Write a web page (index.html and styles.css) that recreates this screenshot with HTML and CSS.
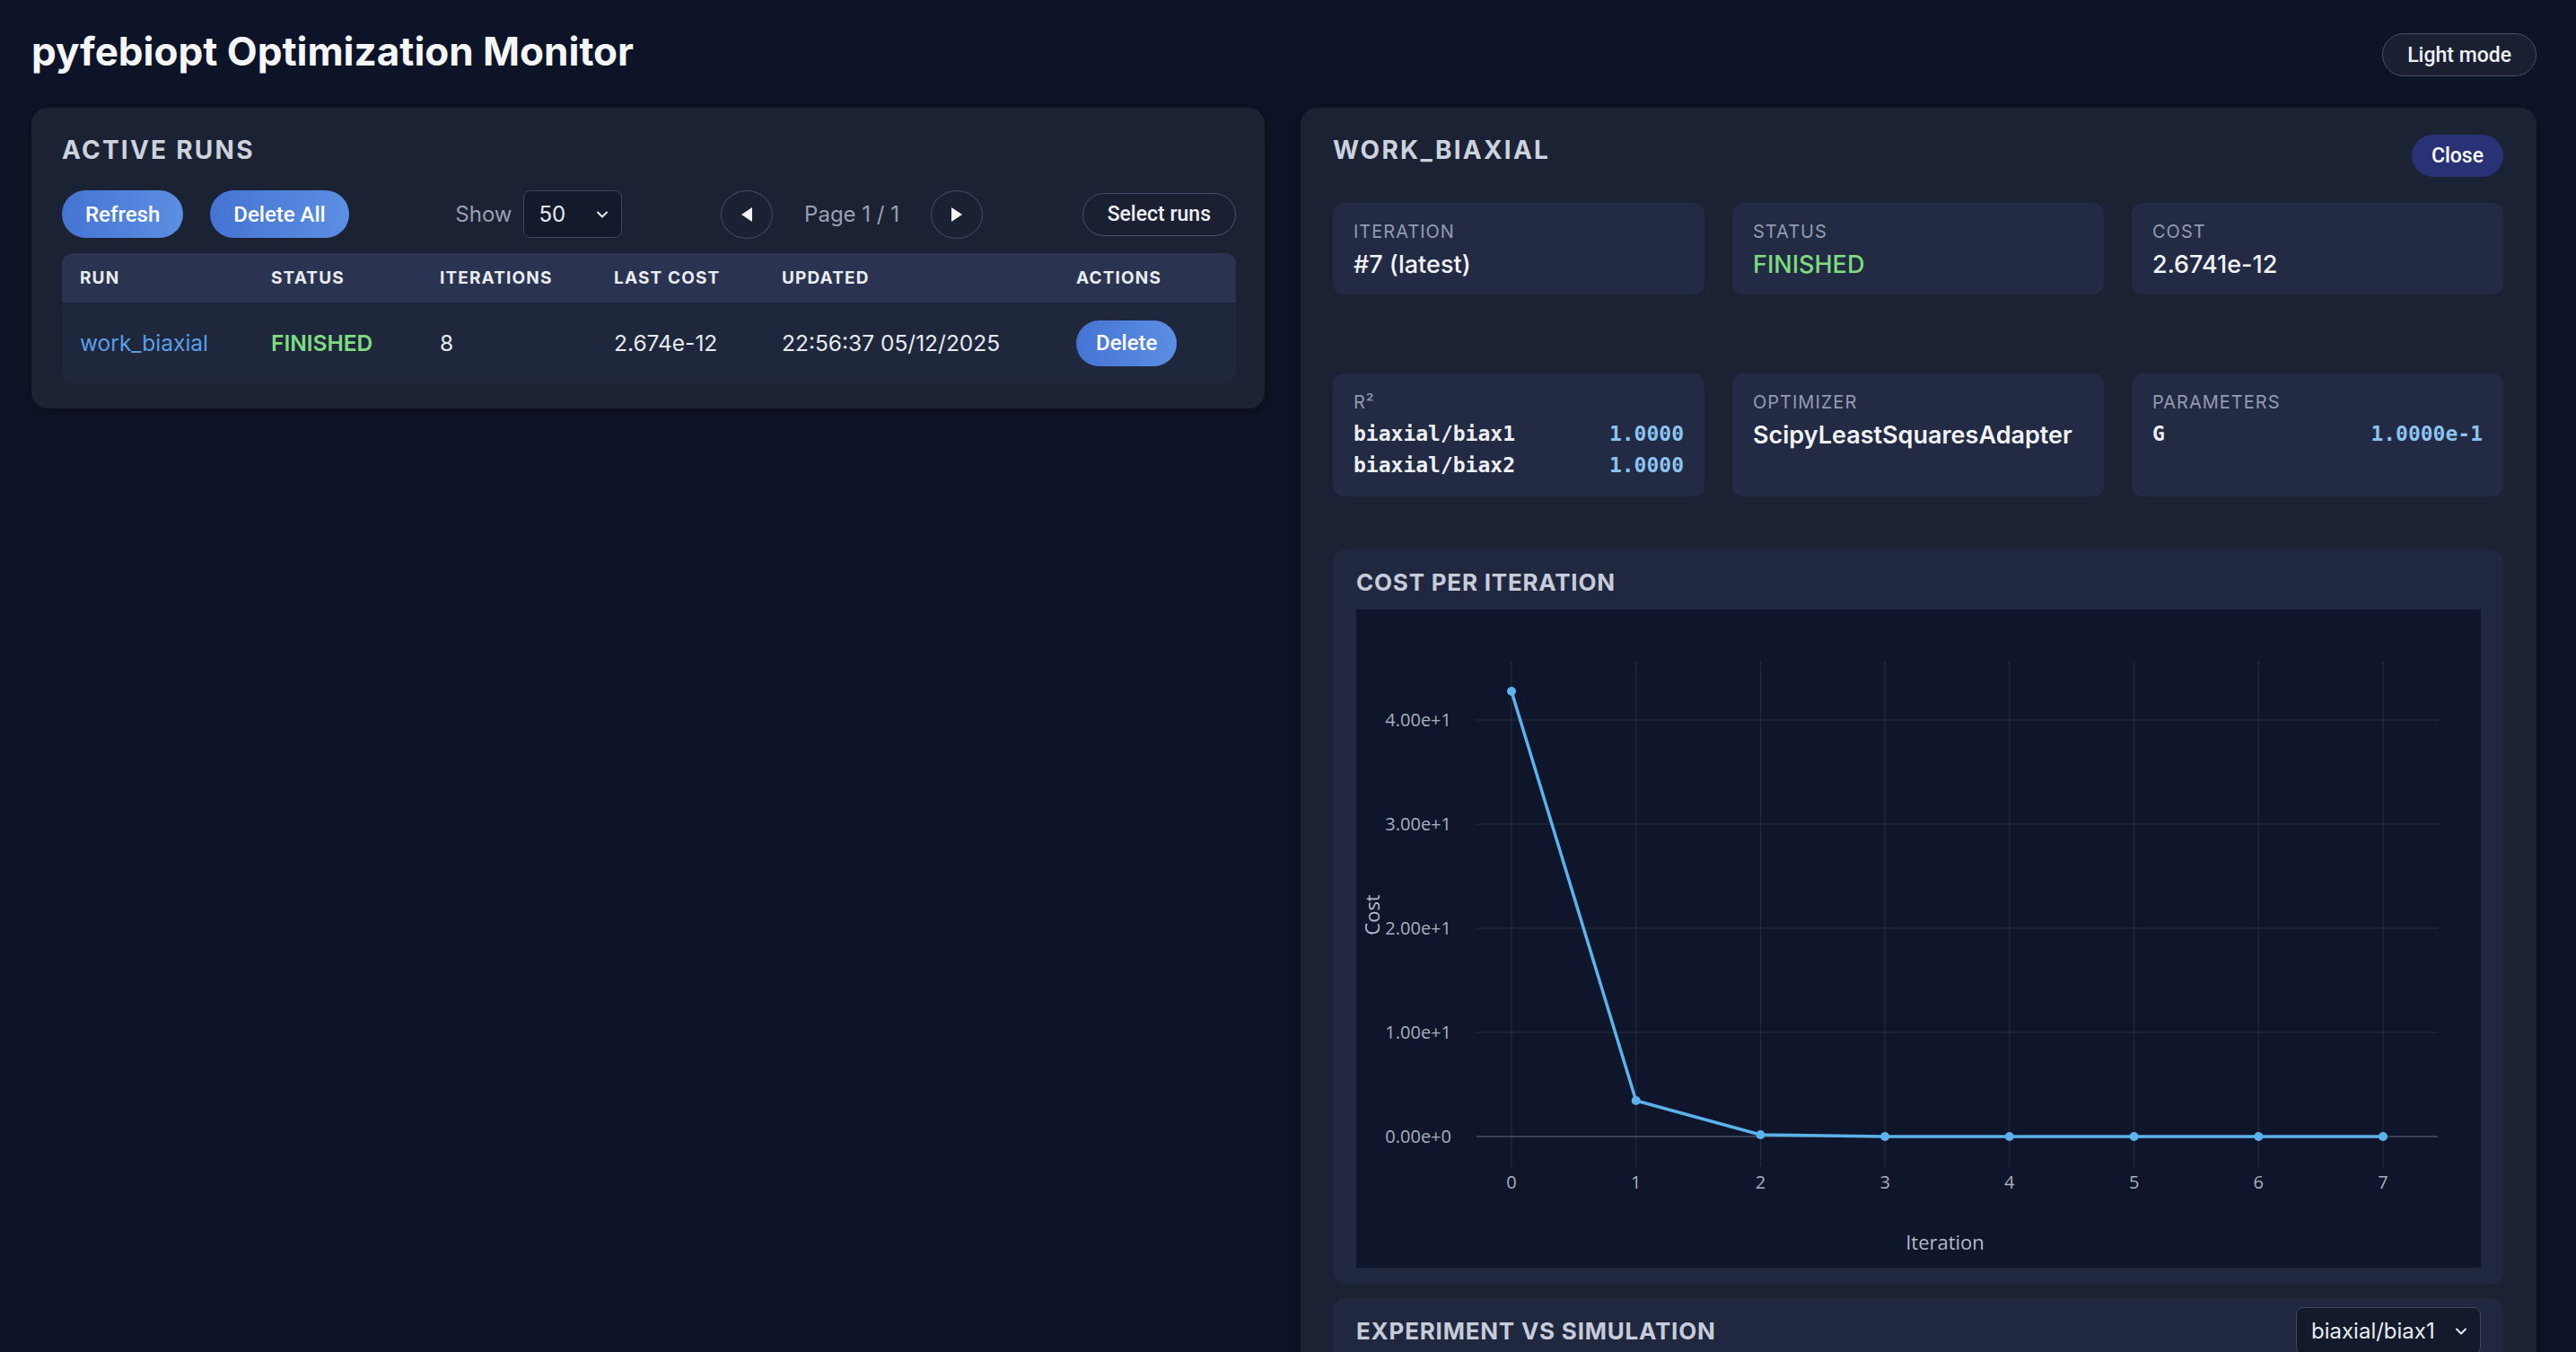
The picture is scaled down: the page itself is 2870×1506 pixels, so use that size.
FILE: index.html
```html
<!DOCTYPE html>
<html lang="en">
<head>
  <meta charset="UTF-8" />
  <meta name="viewport" content="width=device-width, initial-scale=1.0"/>
  <title>pyfebiopt Optimization Monitor</title>
  <link rel="stylesheet" href="styles.css">
</head>
<body>
<div class="page">

  <header class="topbar">
    <h1>pyfebiopt Optimization Monitor</h1>
    <button class="btn-ghost theme-toggle">Light mode</button>
  </header>

  <main class="layout">

    <!-- runs list -->
    <section class="panel runs">
      <h2>Active Runs</h2>
      <div class="toolbar">
        <div class="group">
          <button class="btn">Refresh</button>
          <button class="btn">Delete All</button>
        </div>
        <div class="show">
          <span>Show</span>
          <div class="select small">
            <span>50</span>
            <svg width="14" height="10" viewBox="0 0 14 10"><path d="M2 2.5 L7 7.5 L12 2.5" fill="none" stroke="#e8ebf1" stroke-width="2" stroke-linecap="round" stroke-linejoin="round"/></svg>
          </div>
        </div>
        <div class="pager">
          <button class="circle"><svg width="16" height="18" viewBox="0 0 16 18"><polygon points="14,1 14,17 2,9" fill="#f2f4f8"/></svg></button>
          <span>Page 1 / 1</span>
          <button class="circle"><svg width="16" height="18" viewBox="0 0 16 18"><polygon points="2,1 2,17 14,9" fill="#f2f4f8"/></svg></button>
        </div>
        <button class="btn-ghost">Select runs</button>
      </div>

      <table class="runs-table">
        <colgroup>
          <col style="width:213px"><col style="width:188px"><col style="width:194px">
          <col style="width:187px"><col style="width:328px"><col>
        </colgroup>
        <thead>
          <tr><th>Run</th><th>Status</th><th>Iterations</th><th>Last cost</th><th>Updated</th><th>Actions</th></tr>
        </thead>
        <tbody>
          <tr>
            <td><a class="run-link" href="#">work_biaxial</a></td>
            <td class="ok">FINISHED</td>
            <td>8</td>
            <td>2.674e-12</td>
            <td>22:56:37 05/12/2025</td>
            <td><button class="btn btn-row">Delete</button></td>
          </tr>
        </tbody>
      </table>
    </section>

    <!-- run detail -->
    <section class="panel detail">
      <div class="detail-head">
        <h2>work_biaxial</h2>
        <button class="btn-close">Close</button>
      </div>

      <div class="stats">
        <div class="stat">
          <div class="stat-label">Iteration</div>
          <div class="stat-value">#7 (latest)</div>
        </div>
        <div class="stat">
          <div class="stat-label">Status</div>
          <div class="stat-value ok">FINISHED</div>
        </div>
        <div class="stat">
          <div class="stat-label">Cost</div>
          <div class="stat-value">2.6741e-12</div>
        </div>
        <div class="stat">
          <div class="stat-label">R²</div>
          <div class="mono-list">
            <div class="mono-row"><span>biaxial/biax1</span><span class="num">1.0000</span></div>
            <div class="mono-row"><span>biaxial/biax2</span><span class="num">1.0000</span></div>
          </div>
        </div>
        <div class="stat">
          <div class="stat-label">Optimizer</div>
          <div class="stat-value strong">ScipyLeastSquaresAdapter</div>
        </div>
        <div class="stat">
          <div class="stat-label">Parameters</div>
          <div class="mono-list">
            <div class="mono-row"><span>G</span><span class="num">1.0000e-1</span></div>
          </div>
        </div>
      </div>

      <div class="chart-card">
        <h3>Cost per iteration</h3>
        <div class="plot">
          <svg width="1253" height="733" viewBox="0 0 1253 733" class="chart">
            <!-- vertical grid -->
            <g stroke="#2a3042" stroke-width="1">
              <line x1="173" y1="58" x2="173" y2="621"/>
              <line x1="311.7" y1="58" x2="311.7" y2="621"/>
              <line x1="450.4" y1="58" x2="450.4" y2="621"/>
              <line x1="589.1" y1="58" x2="589.1" y2="621"/>
              <line x1="727.8" y1="58" x2="727.8" y2="621"/>
              <line x1="866.6" y1="58" x2="866.6" y2="621"/>
              <line x1="1005.3" y1="58" x2="1005.3" y2="621"/>
              <line x1="1144" y1="58" x2="1144" y2="621"/>
            </g>
            <!-- horizontal grid -->
            <g stroke="#2a3042" stroke-width="1">
              <line x1="134" y1="123" x2="1205" y2="123"/>
              <line x1="134" y1="239" x2="1205" y2="239"/>
              <line x1="134" y1="355" x2="1205" y2="355"/>
              <line x1="134" y1="471" x2="1205" y2="471"/>
            </g>
            <line x1="134" y1="587" x2="1205" y2="587" stroke="#3b4255" stroke-width="2"/>
            <!-- y ticks -->
            <g class="tick" text-anchor="end">
              <text x="106" y="130">4.00e+1</text>
              <text x="106" y="246">3.00e+1</text>
              <text x="106" y="362">2.00e+1</text>
              <text x="106" y="478">1.00e+1</text>
              <text x="106" y="594">0.00e+0</text>
            </g>
            <!-- x ticks -->
            <g class="tick" text-anchor="middle">
              <text x="173" y="645">0</text>
              <text x="311.7" y="645">1</text>
              <text x="450.4" y="645">2</text>
              <text x="589.1" y="645">3</text>
              <text x="727.8" y="645">4</text>
              <text x="866.6" y="645">5</text>
              <text x="1005.3" y="645">6</text>
              <text x="1144" y="645">7</text>
            </g>
            <text class="axis-title" x="656" y="713" text-anchor="middle">Iteration</text>
            <text class="axis-title" transform="translate(26,340) rotate(-90)" text-anchor="middle">Cost</text>
            <!-- trace -->
            <polyline points="173,91 311.7,547 450.4,585 589.1,587 727.8,587 866.6,587 1005.3,587 1144,587"
                      fill="none" stroke="#5cb3ec" stroke-width="3.5" stroke-linejoin="round"/>
            <g fill="#5cb3ec">
              <circle cx="173" cy="91" r="5"/>
              <circle cx="311.7" cy="547" r="5"/>
              <circle cx="450.4" cy="585" r="5"/>
              <circle cx="589.1" cy="587" r="5"/>
              <circle cx="727.8" cy="587" r="5"/>
              <circle cx="866.6" cy="587" r="5"/>
              <circle cx="1005.3" cy="587" r="5"/>
              <circle cx="1144" cy="587" r="5"/>
            </g>
          </svg>
        </div>
      </div>

      <div class="chart-card">
        <div class="chart-head">
          <h3>Experiment vs simulation</h3>
          <div class="select wide">
            <span>biaxial/biax1</span>
            <svg width="14" height="10" viewBox="0 0 14 10"><path d="M2 2.5 L7 7.5 L12 2.5" fill="none" stroke="#e8ebf1" stroke-width="2" stroke-linecap="round" stroke-linejoin="round"/></svg>
          </div>
        </div>
        <div class="plot tall"></div>
      </div>
    </section>

  </main>
</div>
</body>
</html>
```

FILE: styles.css
```css
body {
  margin: 0;
  background: #0e1427;
  color: #e8ebf1;
  font-family: Inter, Roboto, "Liberation Sans", sans-serif;
}
button {
  font-family: Roboto, "Liberation Sans", sans-serif;
  cursor: pointer;
}
.page {
  padding: 24px 44px 0 35px;
}
.topbar {
  display: flex;
  justify-content: space-between;
  align-items: center;
  height: 66px;
  margin-bottom: 30px;
}
h1 {
  margin: 0;
  font-size: 44px;
  font-weight: 700;
  color: #f4f6fa;
}
h2 {
  margin: 0;
  font-size: 28px;
  line-height: 34px;
  font-weight: 700;
  letter-spacing: 0.08em;
  text-transform: uppercase;
  color: #ccd2de;
}
h3 {
  margin: 0;
  font-size: 26px;
  line-height: 32px;
  font-weight: 700;
  letter-spacing: 0.03em;
  text-transform: uppercase;
  color: #c6ccd9;
}
.btn-ghost {
  height: 48px;
  padding: 0 27px;
  border: 1px solid #465068;
  border-radius: 999px;
  background: #1a2032;
  color: #eef0f5;
  font-size: 23px;
  font-weight: 500;
}
.theme-toggle {
  margin-top: 8px;
}
.btn {
  height: 53px;
  padding: 0 26px;
  border: none;
  border-radius: 999px;
  background: linear-gradient(90deg, #4574d4, #5b8fe2);
  color: #fff;
  font-size: 24px;
  font-weight: 500;
}
.btn-close {
  height: 47px;
  padding: 0 22px;
  border: none;
  border-radius: 999px;
  background: #283275;
  color: #fff;
  font-size: 23px;
  font-weight: 500;
}

.layout {
  display: grid;
  grid-template-columns: 1fr 1fr;
  gap: 40px;
  align-items: start;
}
.panel {
  background: #1b2234;
  border-radius: 18px;
  box-shadow: 0 4px 18px rgba(0, 0, 0, 0.35);
}
.runs {
  padding: 30px 32px 28px 34px;
}
.detail {
  padding: 30px 37px 0 36px;
}

/* toolbar */
.toolbar {
  display: flex;
  justify-content: space-between;
  align-items: center;
  height: 53px;
  margin-top: 28px;
}
.group {
  display: flex;
  gap: 30px;
}
.show {
  display: flex;
  align-items: center;
  gap: 12px;
  margin-left: 8px;
  color: #98a0b1;
  font-size: 24px;
}
.select {
  box-sizing: border-box;
  height: 53px;
  display: flex;
  align-items: center;
  justify-content: space-between;
  border: 1px solid #3e475e;
  border-radius: 8px;
  background: #131a2b;
  color: #e8ebf1;
  font-size: 24px;
}
.select.small {
  width: 110px;
  padding: 0 14px 0 17px;
}
.select.wide {
  width: 206px;
  padding: 0 14px 0 16px;
}
.pager {
  display: flex;
  align-items: center;
  gap: 35px;
  color: #98a0b1;
  font-size: 24px;
}
.circle {
  width: 58px;
  height: 54px;
  padding: 0;
  border: 1px solid #434c63;
  border-radius: 50%;
  background: #1a2133;
  display: flex;
  align-items: center;
  justify-content: center;
}

/* table */
.runs-table {
  width: 100%;
  table-layout: fixed;
  border-collapse: separate;
  border-spacing: 0;
  margin-top: 17px;
  border-radius: 12px;
  overflow: hidden;
}
.runs-table th {
  height: 55px;
  padding: 0 0 0 20px;
  background: #2a3450;
  text-align: left;
  font-size: 19px;
  font-weight: 700;
  letter-spacing: 0.06em;
  text-transform: uppercase;
  color: #e9ecf2;
}
.runs-table td {
  height: 90px;
  padding: 0 0 0 20px;
  background: #1f273d;
  font-size: 24.5px;
  color: #e8ebf1;
}
.run-link {
  color: #5a9ee6;
  text-decoration: none;
}
.runs-table td.ok,
.ok {
  color: #7fdc80;
  font-weight: 600;
}
.btn-row {
  height: 51px;
  padding: 0 22px;
}

/* detail */
.detail-head {
  display: flex;
  justify-content: space-between;
  align-items: flex-start;
  height: 47px;
}
.stats {
  display: grid;
  grid-template-columns: repeat(3, 1fr);
  column-gap: 31px;
  row-gap: 88px;
  margin-top: 29px;
}
.stat {
  background: #222b43;
  border-radius: 12px;
  padding: 20px 23px 17px 23px;
}
.stat-label {
  font-size: 20px;
  line-height: 24px;
  letter-spacing: 0.05em;
  text-transform: uppercase;
  color: #939cae;
}
.stat-value {
  margin-top: 9px;
  font-size: 27px;
  line-height: 32px;
  font-weight: 500;
  color: #f1f3f7;
}
.stat-value.strong {
  font-weight: 600;
}
.stat-value.ok {
  color: #7fdc80;
}
.mono-list {
  margin-top: 6px;
}
.mono-row {
  display: flex;
  justify-content: space-between;
  font-family: "DejaVu Sans Mono", "Liberation Mono", monospace;
  font-size: 23px;
  line-height: 35px;
  font-weight: 700;
  color: #eef0f5;
}
.mono-row .num {
  color: #8cc3f0;
}

/* charts */
.chart-card {
  margin-top: 59px;
  background: #20283f;
  border-radius: 14px;
  padding: 21px 25px 18px 26px;
}
.chart-card + .chart-card {
  margin-top: 16px;
}
.chart-card h3 {
  margin-bottom: 14px;
}
.chart-head {
  display: flex;
  justify-content: space-between;
  align-items: center;
  height: 53px;
  margin-top: -11px;
  margin-bottom: 14px;
}
.chart-head h3 {
  margin-bottom: 0;
}
.plot {
  background: #0f152a;
}
.plot.tall {
  height: 700px;
}
.chart {
  display: block;
}
.tick {
  font-family: "Open Sans", sans-serif;
  font-size: 20px;
  fill: #a8afbe;
}
.axis-title {
  font-family: "Open Sans", sans-serif;
  font-size: 22px;
  fill: #b4bac7;
}
```
